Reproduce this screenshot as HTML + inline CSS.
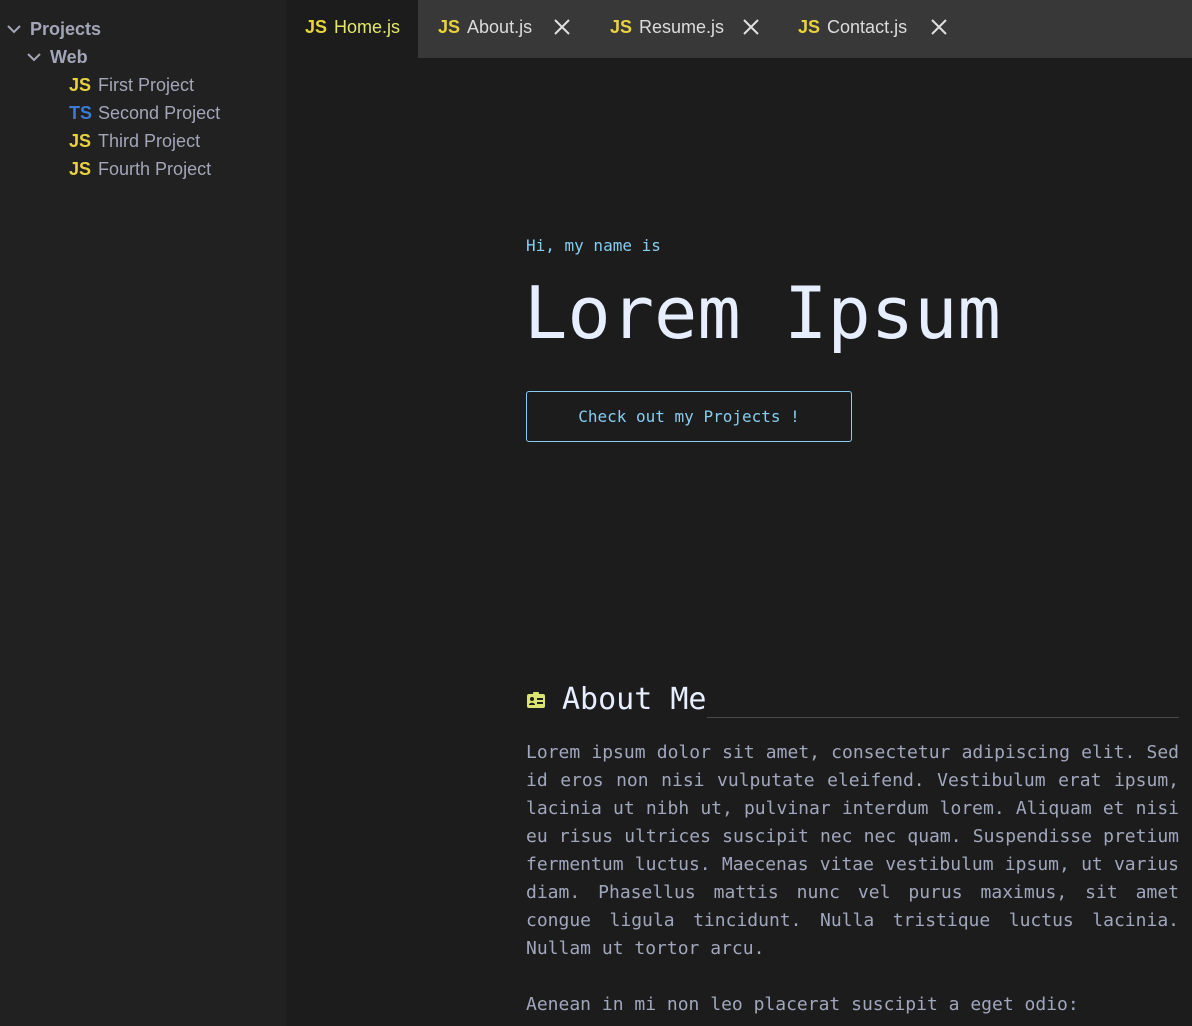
<!DOCTYPE html>
<html><head><meta charset="utf-8"><style>
*{margin:0;padding:0;box-sizing:border-box}
body{width:1192px;height:1026px;overflow:hidden;background:#1c1c1c;font-family:"Liberation Sans",sans-serif;position:relative}
#side{position:absolute;left:0;top:0;width:286px;height:1026px;background:#212121}
.row{position:absolute;height:28px;line-height:28px;font-size:18px;color:#a2a6b8;white-space:nowrap}
.b{font-weight:bold}
.js{color:#e8d33f;font-weight:bold;margin-right:7px;letter-spacing:0}
.ts{color:#3a7bd5;font-weight:bold;margin-right:6px}
#tabs{position:absolute;left:286px;top:0;width:906px;height:58px;background:#383838}
.tab{position:absolute;top:0;height:58px;line-height:54px;font-size:18px;color:#dcdcdc;white-space:nowrap}
.x{position:absolute;top:19px}
.mono{font-family:"DejaVu Sans Mono","Liberation Mono",monospace}
.abs{position:absolute}
</style></head><body>
<div id="side">
  <div class="row b" style="left:6px;top:15px"><svg width="16" height="16" viewBox="0 0 16 16" style="vertical-align:-2px;margin-right:8px"><path d="M2 5l6 6 6-6" stroke="#a2a6b8" stroke-width="2" fill="none"/></svg>Projects</div>
  <div class="row b" style="left:26px;top:43px"><svg width="16" height="16" viewBox="0 0 16 16" style="vertical-align:-2px;margin-right:8px"><path d="M2 5l6 6 6-6" stroke="#a2a6b8" stroke-width="2" fill="none"/></svg>Web</div>
  <div class="row" style="left:69px;top:71px"><span class="js">JS</span>First Project</div>
  <div class="row" style="left:69px;top:99px"><span class="ts">TS</span>Second Project</div>
  <div class="row" style="left:69px;top:127px"><span class="js">JS</span>Third Project</div>
  <div class="row" style="left:69px;top:155px"><span class="js">JS</span>Fourth Project</div>
</div>
<div id="tabs">
  <div class="abs" style="left:0;top:0;width:132px;height:58px;background:#1c1c1c"></div>
  <div class="tab" style="left:19px;color:#e2e76a"><span class="js">JS</span>Home.js</div>
  <div class="tab" style="left:152px"><span class="js">JS</span>About.js</div>
  <svg class="x" style="left:268px" width="16" height="16" viewBox="0 0 16 16"><path d="M1 1l14 14M15 1L1 15" stroke="#e0e0e0" stroke-width="2"/></svg>
  <div class="tab" style="left:324px"><span class="js">JS</span>Resume.js</div>
  <svg class="x" style="left:457px" width="16" height="16" viewBox="0 0 16 16"><path d="M1 1l14 14M15 1L1 15" stroke="#e0e0e0" stroke-width="2"/></svg>
  <div class="tab" style="left:512px"><span class="js">JS</span>Contact.js</div>
  <svg class="x" style="left:645px" width="16" height="16" viewBox="0 0 16 16"><path d="M1 1l14 14M15 1L1 15" stroke="#e0e0e0" stroke-width="2"/></svg>
</div>

<div class="abs mono" style="left:526px;top:235px;font-size:16px;line-height:22px;color:#86cdf0">Hi, my name is</div>
<div class="abs mono" style="left:524px;top:268px;font-size:72px;line-height:90px;color:#e6eeff;white-space:nowrap">Lorem Ipsum</div>
<div class="abs mono" style="left:526px;top:391px;width:326px;height:51px;border:1px solid #86cdf0;border-radius:3px;color:#86cdf0;font-size:16px;line-height:49px;text-align:center">Check out my Projects !</div>

<svg class="abs" style="left:527px;top:692px" width="18" height="16" viewBox="0 0 18 16"><rect x="0" y="2" width="18" height="14" rx="2" fill="#dbe372"/><rect x="6" y="0" width="6" height="4" rx="1" fill="#dbe372"/><circle cx="5" cy="7" r="2" fill="#1c1c1c"/><path d="M2 13c0-3 6-3 6 0z" fill="#1c1c1c"/><rect x="10" y="6" width="6" height="2" fill="#1c1c1c"/><rect x="10" y="10" width="6" height="2" fill="#1c1c1c"/></svg>
<div class="abs mono" style="left:562px;top:680px;font-size:30px;line-height:40px;color:#e6eeff">About Me</div>
<div class="abs" style="left:707px;top:717px;width:472px;height:1px;background:#4a4a4a"></div>
<div class="abs mono" style="left:526px;top:739px;width:653px;font-size:18px;line-height:28px;color:#a0a7bd;text-align:justify">Lorem ipsum dolor sit amet, consectetur adipiscing elit. Sed id eros non nisi vulputate eleifend. Vestibulum erat ipsum, lacinia ut nibh ut, pulvinar interdum lorem. Aliquam et nisi eu risus ultrices suscipit nec nec quam. Suspendisse pretium fermentum luctus. Maecenas vitae vestibulum ipsum, ut varius diam. Phasellus mattis nunc vel purus maximus, sit amet congue ligula tincidunt. Nulla tristique luctus lacinia. Nullam ut tortor arcu.</div>
<div class="abs mono" style="left:526px;top:991px;font-size:18px;line-height:28px;color:#a0a7bd;white-space:nowrap">Aenean in mi non leo placerat suscipit a eget odio:</div>
</body></html>
